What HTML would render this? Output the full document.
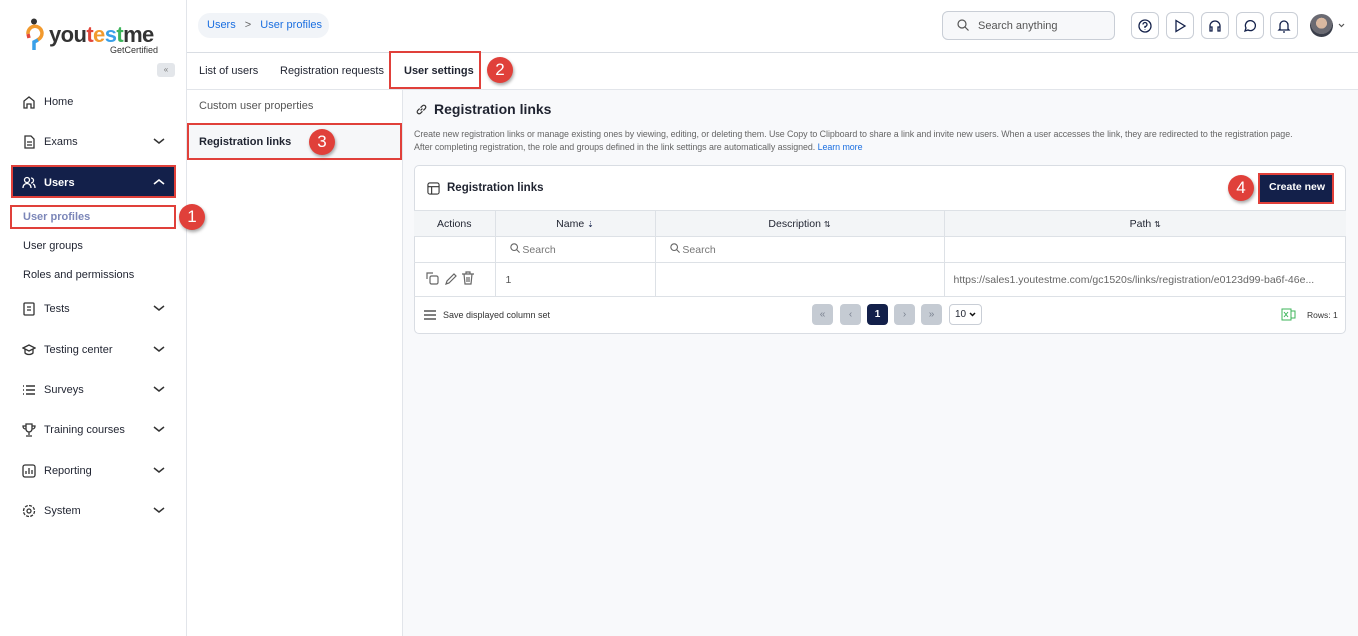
<!DOCTYPE html>
<html><head><meta charset="utf-8"><style>
*{box-sizing:border-box;margin:0;padding:0}
body{width:1358px;height:636px;overflow:hidden;font-family:"Liberation Sans",sans-serif;background:#fff;color:#1f2330;position:relative;font-size:11px}
.a{position:absolute}
.side{left:0;top:0;width:187px;height:636px;border-right:1px solid #e2e5ea;background:#fff}
.nav{position:absolute;left:22px;font-size:11px;color:#1f2330;display:flex;align-items:center}
.nav svg{margin-right:8px}
.red{border:2px solid #e0403a}
.badge{position:absolute;width:26px;height:26px;border-radius:50%;background:#e0403a;color:#fff;font-size:17px;text-align:center;line-height:26px;box-shadow:1px 2px 3px rgba(0,0,0,.35)}
.ib{position:absolute;top:12px;width:28px;height:27px;border:1px solid #c9ced6;border-radius:6px;display:flex;align-items:center;justify-content:center}
th,td{border:1px solid #dde1e6;font-weight:normal}
.pg{position:absolute;top:304px;width:21px;height:21px;border-radius:4px;background:#c5cbd3;color:#7a8290;text-align:center;line-height:21px;font-size:10px}
.cv{position:absolute;left:153px}
</style></head><body>
<div class="a side"></div>
<div class="a" style="left:26px;top:18px">
<svg width="18" height="34" viewBox="0 0 18 34"><circle cx="8" cy="3.5" r="3" fill="#333"/><path d="M2 16a7 7 0 1 1 9 6" stroke="#f29a2e" stroke-width="3.5" fill="none"/><path d="M12 22 L8 24 L8 32" stroke="#3aa0e8" stroke-width="3.5" fill="none"/><path d="M2 16 L3 20" stroke="#e2463a" stroke-width="3.5"/></svg></div>
<div class="a" style="left:49px;top:22px;font-size:22px;font-weight:bold;color:#333;letter-spacing:-0.6px">you<span style="color:#e2463a">t</span><span style="color:#f29a2e">e</span><span style="color:#3aa0e8">s</span><span style="color:#3cb45a">t</span>me</div>
<div class="a" style="left:110px;top:45px;font-size:9px;color:#333">GetCertified</div>
<div class="a" style="left:157px;top:63px;width:18px;height:14px;background:#e3e6ea;border-radius:3px;font-size:8px;color:#777;text-align:center;line-height:14px">&laquo;</div>
<div class="nav" style="top:95px"><svg width="14" height="14" viewBox="0 0 14 14" fill="none" stroke="#333" stroke-width="1.3"><path d="M2 13V6l5-4 5 4v7H9V9H5v4z"/></svg>Home</div>
<div class="nav" style="top:135px"><svg width="14" height="14" viewBox="0 0 14 14" fill="none" stroke="#333" stroke-width="1.3"><path d="M3 1h6l3 3v9H3z M5 7h5 M5 10h5"/></svg>Exams</div>
<div class="a red" style="left:11px;top:165px;width:165px;height:33px;background:#13204a"></div>
<div class="nav" style="top:176px;color:#fff;font-weight:bold"><svg width="14" height="14" viewBox="0 0 14 14" fill="none" stroke="#fff" stroke-width="1.3"><circle cx="5" cy="4" r="2.5"/><path d="M1 12c0-3 2-4.5 4-4.5s4 1.5 4 4.5M9 2a2.5 2.5 0 0 1 0 5M11 8c1.5.5 2 2 2 4"/></svg>Users</div>
<svg class="cv" style="top:178px" width="12" height="8" viewBox="0 0 12 8" fill="none" stroke="#fff" stroke-width="1.6"><path d="M1 6l5-4 5 4"/></svg>
<div class="a red" style="left:10px;top:205px;width:166px;height:24px"></div>
<div class="a" style="left:23px;top:211px;color:#7b86b8;font-weight:bold">User profiles</div>
<div class="badge" style="left:179px;top:204px">1</div>
<div class="a" style="left:23px;top:240px">User groups</div>
<div class="a" style="left:23px;top:269px">Roles and permissions</div>
<div class="nav" style="top:302px"><svg width="14" height="14" viewBox="0 0 14 14" fill="none" stroke="#333" stroke-width="1.3"><rect x="2" y="1" width="10" height="12" rx="1"/><path d="M5 5h4M5 8h4"/></svg>Tests</div>
<div class="nav" style="top:343px"><svg width="14" height="14" viewBox="0 0 14 14" fill="none" stroke="#333" stroke-width="1.3"><path d="M1 5l6-3 6 3-6 3z M3 6v4c2 2 6 2 8 0V6"/></svg>Testing center</div>
<div class="nav" style="top:383px"><svg width="14" height="14" viewBox="0 0 14 14" fill="none" stroke="#333" stroke-width="1.4"><path d="M1 3h1M1 7h1M1 11h1M4 3h9M4 7h9M4 11h9"/></svg>Surveys</div>
<div class="nav" style="top:423px"><svg width="14" height="14" viewBox="0 0 14 14" fill="none" stroke="#333" stroke-width="1.3"><path d="M4 1h6v5a3 3 0 0 1-6 0z M4 3H1c0 3 2 3 3 3M10 3h3c0 3-2 3-3 3M7 9v3M4 13h6"/></svg>Training courses</div>
<div class="nav" style="top:464px"><svg width="14" height="14" viewBox="0 0 14 14" fill="none" stroke="#333" stroke-width="1.3"><rect x="1" y="1" width="12" height="12" rx="2"/><path d="M4 10V7M7 10V4M10 10V6"/></svg>Reporting</div>
<div class="nav" style="top:504px"><svg width="14" height="14" viewBox="0 0 14 14" fill="none" stroke="#333" stroke-width="1.3"><circle cx="7" cy="7" r="2"/><circle cx="7" cy="7" r="5.5" stroke-dasharray="3 1.3"/></svg>System</div>
<svg class="cv" style="top:137px" width="12" height="8" viewBox="0 0 12 8" fill="none" stroke="#333" stroke-width="1.5"><path d="M1 2l5 4 5-4"/></svg>
<svg class="cv" style="top:304px" width="12" height="8" viewBox="0 0 12 8" fill="none" stroke="#333" stroke-width="1.5"><path d="M1 2l5 4 5-4"/></svg>
<svg class="cv" style="top:345px" width="12" height="8" viewBox="0 0 12 8" fill="none" stroke="#333" stroke-width="1.5"><path d="M1 2l5 4 5-4"/></svg>
<svg class="cv" style="top:385px" width="12" height="8" viewBox="0 0 12 8" fill="none" stroke="#333" stroke-width="1.5"><path d="M1 2l5 4 5-4"/></svg>
<svg class="cv" style="top:425px" width="12" height="8" viewBox="0 0 12 8" fill="none" stroke="#333" stroke-width="1.5"><path d="M1 2l5 4 5-4"/></svg>
<svg class="cv" style="top:466px" width="12" height="8" viewBox="0 0 12 8" fill="none" stroke="#333" stroke-width="1.5"><path d="M1 2l5 4 5-4"/></svg>
<svg class="cv" style="top:506px" width="12" height="8" viewBox="0 0 12 8" fill="none" stroke="#333" stroke-width="1.5"><path d="M1 2l5 4 5-4"/></svg>

<div class="a" style="left:187px;top:52px;width:1171px;height:1px;background:#d9dde3"></div>
<div class="a" style="left:198px;top:13px;width:131px;height:25px;background:#f1f4f8;border-radius:12px"></div>
<div class="a" style="left:207px;top:19px;color:#1b6fe0">Users <span style="color:#666;margin:0 6px">&gt;</span> User profiles</div>
<div class="a" style="left:942px;top:11px;width:173px;height:29px;border:1px solid #c9ced6;border-radius:6px;background:#f7f8fa"></div>
<svg class="a" style="left:957px;top:19px" width="12" height="12" viewBox="0 0 12 12" fill="none" stroke="#555" stroke-width="1.2"><circle cx="5" cy="5" r="4"/><path d="M8 8l3.5 3.5"/></svg>
<div class="a" style="left:978px;top:20px;color:#555">Search anything</div>
<div class="ib" style="left:1131px"><svg width="14" height="14" viewBox="0 0 14 14" fill="none" stroke="#13204a" stroke-width="1.3"><circle cx="7" cy="7" r="6"/><path d="M5 5.5a2 2 0 1 1 2 2v1.5M7 10.5v.5"/></svg></div>
<div class="ib" style="left:1166px"><svg width="14" height="14" viewBox="0 0 14 14" fill="none" stroke="#13204a" stroke-width="1.3"><path d="M3 1.5v11l9-5.5z"/></svg></div>
<div class="ib" style="left:1201px"><svg width="14" height="14" viewBox="0 0 14 14" fill="none" stroke="#13204a" stroke-width="1.3"><path d="M2 10V7a5 5 0 0 1 10 0v3M2 8h2v4H2zM10 8h2v4h-2z"/></svg></div>
<div class="ib" style="left:1236px"><svg width="14" height="14" viewBox="0 0 14 14" fill="none" stroke="#13204a" stroke-width="1.3"><path d="M2 12l1-3a5 5 0 1 1 2 2z"/></svg></div>
<div class="ib" style="left:1270px"><svg width="14" height="14" viewBox="0 0 14 14" fill="none" stroke="#13204a" stroke-width="1.3"><path d="M3 10V6a4 4 0 0 1 8 0v4l1 1H2zM6 13h2"/></svg></div>
<div class="a" style="left:1310px;top:14px;width:23px;height:23px;border-radius:50%;background:radial-gradient(circle at 50% 40%,#d9b8a0 0 30%,#6a6a72 31% 60%,#3a3e4a 61%)"></div>
<svg class="a" style="left:1338px;top:23px" width="7" height="5" viewBox="0 0 7 5" fill="none" stroke="#555" stroke-width="1.2"><path d="M1 1l2.5 2.5L6 1"/></svg>

<div class="a" style="left:187px;top:89px;width:1171px;height:1px;background:#e2e5ea"></div>
<div class="a" style="left:199px;top:65px">List of users</div>
<div class="a" style="left:280px;top:65px">Registration requests</div>
<div class="a red" style="left:389px;top:51px;width:92px;height:38px"></div>
<div class="a" style="left:404px;top:65px;font-weight:bold">User settings</div>
<div class="badge" style="left:487px;top:57px">2</div>

<div class="a" style="left:402px;top:90px;width:1px;height:546px;background:#e2e5ea"></div>
<div class="a" style="left:199px;top:100px;color:#555">Custom user properties</div>
<div class="a red" style="left:187px;top:123px;width:215px;height:37px;background:#f6f7f9"></div>
<div class="a" style="left:199px;top:136px;font-weight:bold">Registration links</div>
<div class="badge" style="left:309px;top:129px">3</div>

<div class="a" style="left:403px;top:90px;width:955px;height:546px;background:#f8f9fb"></div>
<svg class="a" style="left:415px;top:103px" width="13" height="13" viewBox="0 0 14 14" fill="none" stroke="#333" stroke-width="1.3"><path d="M6 8l2-2M5 6L3 8a2 2 0 0 0 3 3l2-2M9 8l2-2a2 2 0 0 0-3-3L6 5"/></svg>
<div class="a" style="left:434px;top:101px;font-size:14px;font-weight:bold">Registration links</div>
<div class="a" style="left:414px;top:128px;font-size:8.9px;color:#666;line-height:13px;width:940px;letter-spacing:-0.05px">Create new registration links or manage existing ones by viewing, editing, or deleting them. Use Copy to Clipboard to share a link and invite new users. When a user accesses the link, they are redirected to the registration page.<br>After completing registration, the role and groups defined in the link settings are automatically assigned. <span style="color:#1b6fe0">Learn more</span></div>

<div class="a" style="left:414px;top:165px;width:932px;height:169px;background:#fff;border:1px solid #d9dde3;border-radius:5px"></div>
<svg class="a" style="left:427px;top:182px" width="13" height="13" viewBox="0 0 14 14" fill="none" stroke="#333" stroke-width="1.2"><rect x="1" y="1" width="12" height="12" rx="2"/><path d="M1 5h12M5 5v8"/></svg>
<div class="a" style="left:447px;top:182px;font-size:11.5px;font-weight:bold">Registration links</div>
<div class="badge" style="left:1228px;top:175px">4</div>
<div class="a red" style="left:1258px;top:173px;width:76px;height:31px;background:#13204a"></div>
<div class="a" style="left:1269px;top:181px;color:#fff;font-weight:bold;font-size:10.5px">Create new</div>

<table class="a" style="left:414px;top:210px;width:932px;border-collapse:collapse;font-size:10.5px">
<tr style="height:26px;background:#f3f5f7"><th style="width:81px;border-left:0">Actions</th><th style="width:160px">Name <span style="font-size:8px;color:#13204a">⇣</span></th><th style="width:289px">Description <span style="font-size:8px">⇅</span></th><th style="border-right:0">Path <span style="font-size:8px">⇅</span></th></tr>
<tr style="height:26px"><td style="border-left:0"></td><td style="color:#777;padding-left:14px"><svg width="10" height="10" viewBox="0 0 12 12" fill="none" stroke="#666" stroke-width="1.3"><circle cx="5" cy="5" r="4"/><path d="M8 8l3.5 3.5"/></svg> Search</td><td style="color:#777;padding-left:14px"><svg width="10" height="10" viewBox="0 0 12 12" fill="none" stroke="#666" stroke-width="1.3"><circle cx="5" cy="5" r="4"/><path d="M8 8l3.5 3.5"/></svg> Search</td><td style="border-right:0"></td></tr>
<tr style="height:34px"><td style="border-left:0;text-align:center"><svg width="58" height="16" viewBox="0 0 58 16" fill="none" stroke="#666" stroke-width="1.2"><path d="M2 9V3h6"/><rect x="5" y="6" width="8" height="8" rx="1.5"/><path d="M21 14l1-3 7-7 2 2-7 7z"/><path d="M37 4h12M41 4V2h4v2M39 4l1 10h6l1-10M42 7v5M44 7v5"/></svg></td><td style="padding-left:10px;color:#555">1</td><td></td><td style="border-right:0;padding-left:9px;color:#666">https://sales1.youtestme.com/gc1520s/links/registration/e0123d99-ba6f-46e...</td></tr>
</table>
<svg class="a" style="left:424px;top:310px" width="12" height="10" viewBox="0 0 12 10" stroke="#333" stroke-width="1.2"><path d="M0 1h12M0 5h12M0 9h12"/></svg>
<div class="a" style="left:443px;top:310px;font-size:9px;color:#333">Save displayed column set</div>
<div class="pg" style="left:812px">«</div>
<div class="pg" style="left:840px">‹</div>
<div class="pg" style="left:867px;background:#13204a;color:#fff;font-weight:bold">1</div>
<div class="pg" style="left:894px">›</div>
<div class="pg" style="left:921px">»</div>
<div class="a" style="left:949px;top:304px;width:33px;height:21px;border:1px solid #c9ced6;border-radius:4px;font-size:10px;line-height:19px;padding-left:5px">10 <svg width="7" height="5" viewBox="0 0 7 5" fill="none" stroke="#111" stroke-width="1.5"><path d="M1 1l2.5 2.5L6 1"/></svg></div>
<svg class="a" style="left:1281px;top:307px" width="15" height="15" viewBox="0 0 15 15" fill="none" stroke="#3cb45a" stroke-width="1"><rect x="1" y="2" width="9" height="11"/><path d="M10 4h4v7h-4M3 5l4 5M7 5l-4 5"/></svg>
<div class="a" style="left:1307px;top:310px;font-size:8.5px;color:#333">Rows: 1</div>
</body></html>
